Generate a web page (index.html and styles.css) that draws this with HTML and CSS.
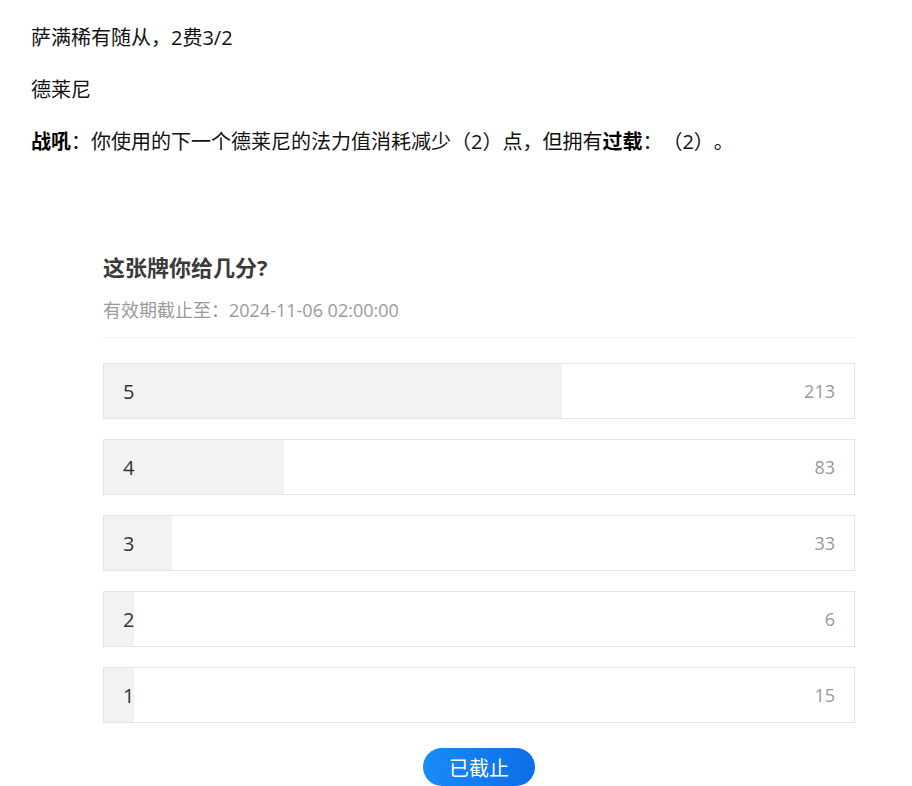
FILE: index.html
```html
<!DOCTYPE html>
<html lang="zh-CN">
<head>
  <meta charset="UTF-8" />
  <meta name="viewport" content="width=device-width, initial-scale=1" />
  <title>这张牌你给几分？</title>
  <link rel="stylesheet" href="styles.css">
</head>
<body>
  <div class="card-text">
    <p>萨满稀有随从，2费3/2</p>
    <p>德莱尼</p>
    <p><strong>战吼</strong>：你使用的下一个德莱尼的法力值消耗减少（2）点，但拥有<strong>过载</strong>：（2）。</p>
  </div>

  <div class="poll">
    <h2 class="poll-title">这张牌你给几分?</h2>
    <div class="poll-deadline">有效期截止至：2024-11-06 02:00:00</div>

    <ul class="poll-options">
      <li class="option">
        <div class="option-fill" style="width: 61%"></div>
        <span class="option-label">5</span>
        <span class="option-count">213</span>
      </li>
      <li class="option">
        <div class="option-fill" style="width: 24%"></div>
        <span class="option-label">4</span>
        <span class="option-count">83</span>
      </li>
      <li class="option">
        <div class="option-fill" style="width: 9%"></div>
        <span class="option-label">3</span>
        <span class="option-count">33</span>
      </li>
      <li class="option">
        <div class="option-fill" style="width: 4%"></div>
        <span class="option-label">2</span>
        <span class="option-count">6</span>
      </li>
      <li class="option">
        <div class="option-fill" style="width: 4%"></div>
        <span class="option-label">1</span>
        <span class="option-count">15</span>
      </li>
    </ul>

    <div class="poll-actions">
      <button class="poll-button" disabled>已截止</button>
    </div>
  </div>
</body>
</html>
```

FILE: styles.css
```css
body {
  margin: 0;
  padding: 23px 31px 0 31px;
  background: #fff;
  color: #111;
  font-family: "Open Sans", "Noto Sans CJK SC", sans-serif;
  text-spacing-trim: space-all;
  overflow: hidden;
}

.card-text p {
  margin: 0 0 22px 0;
  font-size: 20px;
  line-height: 30px;
}

.card-text strong {
  font-weight: bold;
  color: #000;
}

.poll {
  width: 752px;
  margin: 94px 0 0 72px;
}

.poll-title {
  margin: 0;
  font-size: 22px;
  line-height: 33px;
  font-weight: bold;
  color: #3a3a3a;
}

.poll-deadline {
  margin-top: 13px;
  font-size: 18px;
  line-height: 27px;
  color: #9a9a9a;
  padding-bottom: 13px;
  border-bottom: 1px solid #f2f2f2;
}

.poll-options {
  list-style: none;
  margin: 25px 0 0 0;
  padding: 0;
  display: flex;
  flex-direction: column;
  gap: 20px;
}

.option {
  position: relative;
  height: 54px;
  border: 1px solid #e3e3e3;
  display: flex;
  align-items: center;
  justify-content: space-between;
  padding: 0 19px;
}

.option-fill {
  position: absolute;
  left: 0;
  top: 0;
  bottom: 0;
  background: #f2f2f2;
}

.option-label {
  position: relative;
  font-size: 20px;
  color: #333;
}

.option-count {
  position: relative;
  font-size: 18px;
  color: #999;
}

.poll-actions {
  display: flex;
  justify-content: center;
  margin-top: 25px;
}

.poll-button {
  width: 112px;
  height: 38px;
  border: none;
  border-radius: 19px;
  background: linear-gradient(90deg, #1a8cf7, #0b6ee9);
  color: #fff;
  font-family: "Open Sans", "Noto Sans CJK SC", sans-serif;
  font-size: 20px;
  padding: 0;
}
```
